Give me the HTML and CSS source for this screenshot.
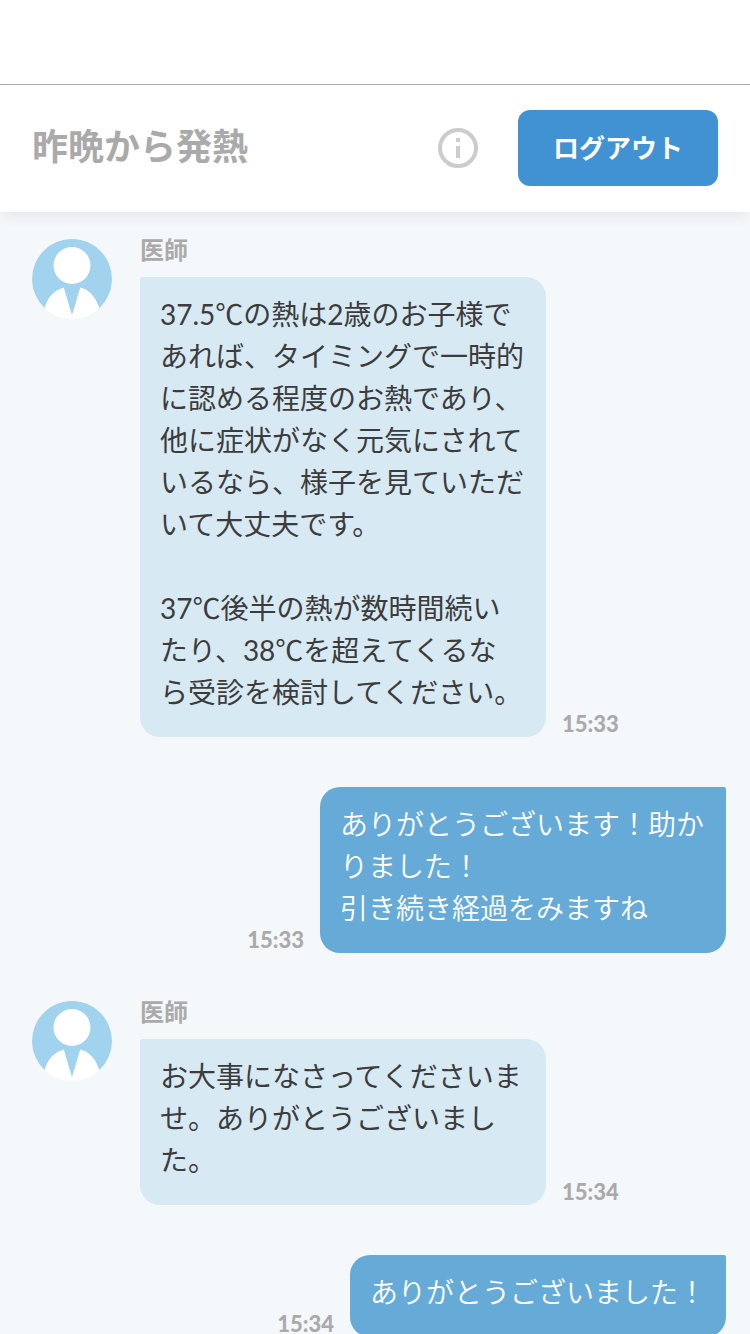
FILE: index.html
```html
<!DOCTYPE html>
<html lang="ja">
    <head>
        <meta charset="utf-8">
        <meta name="viewport" content="width=device-width">
        <title>昨晩から発熱</title>
        <link rel="stylesheet" href="styles.css">
    </head>
    <body>
        <svg class="symbols" aria-hidden="true">
            <symbol id="doctor" viewBox="0 0 80 80">
                <circle cx="40" cy="40" r="40" fill="#fbfcfe"/>
                <path d="M12.500 69A40 40 0 1 1 67.500 69Z" fill="#a1d2ee"/>
                <circle cx="40" cy="26.500" r="18.500" fill="#fff"/>
                <path d="M32 48.500C22 51 16 58 12.500 69A40 40 0 0 0 67.500 69C63 57 57 50.500 48 48.500L40 76Z" fill="#fff"/>
                <path d="M32 48.500L40 76L48 48.500Z" fill="#a1d2ee"/>
            </symbol>
        </svg>
        <div class="mainContainer">
            <div class="statusBar"></div>
            <header class="pageTop">
                <h1>昨晩から発熱</h1>
                <button class="infoButton" type="button" aria-label="情報">
                    <svg viewBox="0 0 40 40" width="40" height="40">
                        <circle cx="20" cy="20" r="18" fill="none" stroke="#ccc" stroke-width="4"/>
                        <path d="M18 10h4v4h-4zM18 18h4v12h-4z" fill="#ccc"/>
                    </svg>
                </button>
                <button class="logout" type="button">ログアウト</button>
            </header>
            <main class="chat">
                <div class="message doctor">
                    <svg class="avatar"><use href="#doctor"/></svg>
                    <div class="messageBody">
                        <div class="name">医師</div>
                        <div class="line">
                            <p class="bubble">37.5℃の熱は2歳のお子様であれば、タイミングで一時的に認める程度のお熱であり、他に症状がなく元気にされているなら、様子を見ていただいて大丈夫です。<br><br>37℃後半の熱が数時間続いたり、38℃を超えてくるな<br>ら受診を検討してください。</p>
                            <time>15:33</time>
                        </div>
                    </div>
                </div>
                <div class="message user">
                    <div class="line">
                        <p class="bubble">ありがとうございます！助かりました！<br>引き続き経過をみますね</p>
                        <time>15:33</time>
                    </div>
                </div>
                <div class="message doctor">
                    <svg class="avatar"><use href="#doctor"/></svg>
                    <div class="messageBody">
                        <div class="name">医師</div>
                        <div class="line">
                            <p class="bubble">お大事になさってくださいませ。ありがとうございました。</p>
                            <time>15:34</time>
                        </div>
                    </div>
                </div>
                <div class="message user">
                    <div class="line">
                        <p class="bubble">ありがとうございました！</p>
                        <time>15:34</time>
                    </div>
                </div>
            </main>
        </div>
    </body>
</html>
```
FILE: styles.css
```css
html, body, .mainContainer {
    width: 100%;
    height: 100%;
    margin: 0;
}
body {
    font-family: "Noto Sans CJK JP", sans-serif;
    background-color: #f4f8fb;
}
.symbols {
    display: none;
}
.mainContainer {
    display: flex;
    flex-direction: column;
}
.statusBar {
    flex: none;
    height: 84px;
    background-color: #fff;
    border-bottom: 1px solid #aaa;
}
.pageTop {
    flex: none;
    display: flex;
    align-items: center;
    padding: 25px 32px 26px;
    background-color: #fff;
    box-shadow: 0 8px 12px -4px #dfe6e9;
    z-index: 1;
}
h1 {
    flex-grow: 1;
    margin: 0;
    padding-bottom: 8px;
    font-size: 36px;
    line-height: 52px;
    color: #aaa;
}
button {
    padding: 0;
    border: 0;
    font-family: inherit;
    cursor: pointer;
}
.infoButton {
    height: 40px;
    margin-right: 40px;
    background: none;
}
.logout {
    width: 200px;
    height: 76px;
    padding-bottom: 4px;
    border-radius: 12px;
    background-color: #4192d3;
    color: #fff;
    font-size: 26px;
    font-weight: bold;
}
.chat {
    flex: 1;
    min-height: 0;
    display: flex;
    flex-direction: column;
    gap: 48px;
    padding: 27px 24px 0 32px;
    overflow-y: auto;
    scrollbar-width: none;
}
.message {
    flex: none;
    display: flex;
}
.doctor {
    gap: 28px;
}
.user {
    justify-content: flex-end;
    padding-top: 2px;
}
.avatar {
    flex: none;
    width: 80px;
    height: 80px;
}
.name {
    margin-bottom: 18px;
    font-size: 24px;
    font-weight: bold;
    line-height: 20px;
    color: #aaa;
}
.line {
    display: flex;
    align-items: flex-end;
    gap: 16px;
}
.user .line {
    flex-direction: row-reverse;
}
.bubble {
    box-sizing: border-box;
    max-width: 406px;
    margin: 0;
    padding: 16px 20px 24px;
    border-radius: 2px 20px 20px 20px;
    background-color: #d7e9f3;
    color: #3c3c3c;
    font-family: Lato, "Noto Sans CJK JP", sans-serif;
    font-size: 28px;
    font-weight: 400;
    line-height: 42px;
}
.user .bubble {
    border-radius: 20px 2px 20px 20px;
    background-color: #66abd7;
    color: #fff;
    font-weight: 350;
}
time {
    margin-bottom: 3px;
    font-family: Lato, sans-serif;
    font-size: 22px;
    font-weight: 900;
    line-height: 20px;
    color: #aaa;
}
```
